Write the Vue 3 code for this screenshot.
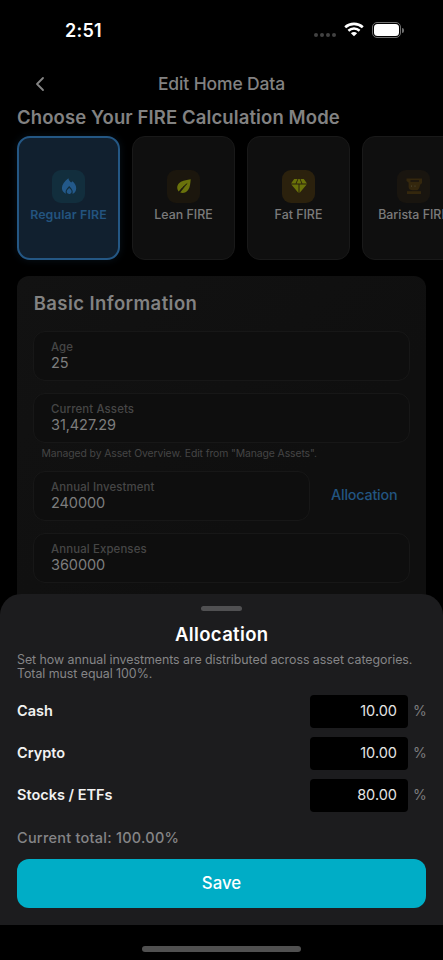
<script setup>
import { ref } from 'vue'

const modes = [
  { key: 'regular', label: 'Regular FIRE' },
  { key: 'lean', label: 'Lean FIRE' },
  { key: 'fat', label: 'Fat FIRE' },
  { key: 'barista', label: 'Barista FIRE' }
]
const selected = ref('regular')
const rows = ref([
  { name: 'Cash', value: '10.00' },
  { name: 'Crypto', value: '10.00' },
  { name: 'Stocks / ETFs', value: '80.00' }
])
</script>

<template>
  <div class="phone">
    <header class="status">
      <span class="time">2:51</span>
      <div class="indicators">
        <span class="dots"><i></i><i></i><i></i><i></i></span>
        <svg class="wifi" viewBox="0 0 20 15" fill="none" stroke="#fff">
          <path d="M1.2 5.2C6.2 .7 13.8 .7 18.8 5.2" stroke-width="2.7" />
          <path d="M4.4 8.7C7.6 5.8 12.4 5.8 15.6 8.7" stroke-width="2.5" />
          <path d="M10 14.2 6.9 11.2C8.6 9.6 11.4 9.6 13.1 11.2Z" fill="#fff" stroke="none" />
        </svg>
        <span class="battery"><b></b></span>
        <span class="cap"></span>
      </div>
    </header>

    <nav class="nav">
      <svg class="back" viewBox="0 0 10 16" fill="none" stroke="#858585" stroke-width="1.8" stroke-linecap="round" stroke-linejoin="round">
        <path d="M8 2 2 8l6 6" />
      </svg>
      <span class="nav-title">Edit Home Data</span>
    </nav>

    <h2 class="heading">Choose Your FIRE Calculation Mode</h2>

    <div class="modes">
      <div v-for="m in modes" :key="m.key" class="mode" :class="[m.key, { active: selected === m.key }]" @click="selected = m.key">
        <span class="badge">
          <svg v-if="m.key === 'regular'" viewBox="0 0 16 16">
            <path fill="#23598a" fill-rule="evenodd" d="M7.4.2C7.8 2.4 9 3.4 10.2 4.5L11.4 3.2C13.8 5.2 15.2 7.6 15.2 10.2C15.2 13.2 13.6 15.3 11.4 15.8C12.4 13.3 11.4 11.3 8.2 8C5 11.3 3.9 13.3 5 15.8C2.6 15 .9 12.9.9 10.1C.9 6.4 3.6 3.2 7.4.2ZM8.2 10.1C10.3 12 10.9 13 10.5 14.2C10.1 15.6 9.2 15.9 8.2 15.9S6.2 15.5 5.8 14.2C5.5 13 6.2 12 8.2 10.1Z" />
          </svg>
          <svg v-else-if="m.key === 'lean'" viewBox="0 0 16 16">
            <path fill="#6a720b" d="M14.7 1.2C9 2 5.2 2.8 3 5.2C.4 8 1 11.3 2.8 13.6L11.4 5.5 4.2 14.6C7.2 15.4 10.3 14.7 12.1 12C14.2 9 14.3 5.4 14.7 1.2Z" />
            <path d="M3 14.4C5 10.8 7.4 8.3 11.2 5.6" fill="none" stroke="#19150d" stroke-width=".9" />
          </svg>
          <svg v-else-if="m.key === 'fat'" viewBox="0 0 16 16" fill="#6a7209">
            <path d="M3.2 1H6.5L4.6 5.5H0ZM7.4 1h1.2l1.9 4.5h-5ZM9.5 1h3.3L16 5.5h-4.6ZM.3 6.5h7.2V15ZM8.5 6.5h7.2L8.5 15Z" />
          </svg>
          <svg v-else viewBox="0 0 16 16" fill="#34270d">
            <path fill-rule="evenodd" d="M.5.5H16.5V5L14.5 6.3 13 10.5 11.5 12.2H6C3.6 12.2 2.6 10.8 2.6 8.6V4.5L.5 3ZM4.5 2.2V3.8H13V2.2Z" />
            <path d="M1 13.2H15V16H1Z" />
            <circle cx="5.5" cy="8" r=".5" fill="#5b5948" /><circle cx="9" cy="8" r=".5" fill="#5b5948" />
          </svg>
        </span>
        <span class="mode-label">{{ m.label }}</span>
      </div>
    </div>

    <section class="panel">
      <h3 class="panel-title">Basic Information</h3>
      <div class="field">
        <span class="label">Age</span><span class="value">25</span>
      </div>
      <div class="field">
        <span class="label">Current Assets</span><span class="value">31,427.29</span>
      </div>
      <p class="note">Managed by Asset Overview. Edit from "Manage Assets".</p>
      <div class="invest">
        <div class="field">
          <span class="label">Annual Investment</span><span class="value">240000</span>
        </div>
        <span class="link">Allocation</span>
      </div>
      <div class="field">
        <span class="label">Annual Expenses</span><span class="value">360000</span>
      </div>
    </section>

    <div class="overlay">
      <section class="sheet">
        <div class="handle"></div>
        <h1 class="sheet-title">Allocation</h1>
        <p class="desc">Set how annual investments are distributed across asset categories.<br>Total must equal 100%.</p>
        <div v-for="r in rows" :key="r.name" class="row">
          <span class="name">{{ r.name }}</span>
          <span class="amount">{{ r.value }}</span>
          <span class="pct">%</span>
        </div>
        <p class="total">Current total: 100.00%</p>
        <button class="save">Save</button>
      </section>
      <footer class="footer"><div class="home"></div></footer>
    </div>
  </div>
</template>

<style>
body { background: #000; }
</style>

<style scoped>
* { box-sizing: border-box; margin: 0; padding: 0; }
.phone {
  position: relative; width: 443px; height: 960px; overflow: hidden;
  background: #000; color: #828282; font-family: Inter, sans-serif;
  display: flex; flex-direction: column; white-space: nowrap;
}
.status { height: 59px; flex: none; display: flex; justify-content: space-between; padding: 0 39px 0 65px; }
.time { color: #fff; font-size: 18px; font-weight: 600; line-height: 61px; letter-spacing: .25px; }
.indicators { display: flex; align-items: flex-start; padding-top: 22px; }
.dots { display: flex; gap: 2px; margin: 11px 8px 0 0; }
.dots i { width: 4px; height: 4px; border-radius: 50%; background: #424242; }
.wifi { width: 20px; height: 15px; margin-right: 8px; }
.battery { width: 29px; height: 16px; border: 1px solid #6e6e6e; border-radius: 5px; padding: 1px; display: flex; }
.battery b { flex: 1; background: #fff; border-radius: 3.5px; }
.cap { width: 2px; height: 5px; margin: 6px 0 0 1px; background: #6e6e6e; border-radius: 0 2px 2px 0; }

.nav { height: 48px; flex: none; display: grid; grid-template-columns: 60px 1fr 60px; align-items: center; text-align: center; padding-top: 1px; }
.back { width: 10px; height: 16px; justify-self: end; margin-right: 15.5px; }
.nav-title { font-size: 17.5px; font-weight: 500; line-height: 22px; letter-spacing: -.14px; }
.heading { height: 21px; flex: none; padding-left: 17px; font-size: 18.5px; font-weight: 600; line-height: 21px; letter-spacing: .11px; }

.modes { display: flex; gap: 12px; flex: none; height: 148px; padding: 8px 0 16px 17px; }
.mode {
  width: 103px; height: 124px; flex: none; border-radius: 13px; border: 1px solid #191919; background: #0f0f0f;
  display: flex; flex-direction: column; align-items: center; padding-top: 33px; color: #7b7b7b;
}
.mode.active { border: 2px solid #245784; background: #11202f; padding-top: 32px; color: #23547f; box-shadow: 0 0 9px #08121b; }
.badge { width: 33px; height: 33px; border-radius: 9px; background: #1b160d; display: flex; align-items: flex-start; justify-content: center; padding-top: 8px; }
.badge svg { width: 16px; height: 16px; }
.regular .badge { background: #122e3d; }
.fat .badge { background: #2b210d; }
.barista .badge { background: #19150f; }
.mode-label { margin-top: 3px; font-size: 12.4px; line-height: 17px; font-weight: 500; }
.active .mode-label { font-weight: 600; letter-spacing: .12px; }

.panel { flex: none; width: 409px; height: 400px; margin-left: 17px; padding: 15px 16px; border-radius: 12px; background: linear-gradient(135deg, #121212, #0f0f0f 60%); display: flex; flex-direction: column; }
.panel-title { height: 25px; margin-bottom: 15px; padding-left: .7px; font-size: 18.5px; font-weight: 600; line-height: 25px; letter-spacing: .42px; }
.field { height: 50px; margin-bottom: 12px; border: 1px solid #171717; border-radius: 12px; background: #0e0e0e; padding: 7px 17px; display: flex; flex-direction: column; flex: none; align-items: flex-start; }
.label { font-size: 11.4px; line-height: 17px; height: 16px; font-weight: 500; color: #464646; letter-spacing: .13px; }
.value { font-size: 14.5px; line-height: 16px; color: #7d7d7d; letter-spacing: -.07px; }
.note { height: 28px; margin-top: -12px; padding-left: 8.5px; font-size: 10.4px; line-height: 21px; color: #454545; letter-spacing: -.1px; }
.invest { display: flex; height: 62px; flex: none; }
.invest .field { width: 277px; }
.link { margin-left: 21px; color: #225581; font-size: 14.3px; font-weight: 500; line-height: 48px; letter-spacing: -.18px; }

.overlay { position: absolute; left: 0; right: 0; bottom: 0; height: 366px; }
.sheet { height: 331px; background: #1c1c1e; border-radius: 21px 21px 0 0; padding: 12px 17px 17px; display: flex; flex-direction: column; }
.handle { width: 41px; height: 5px; border-radius: 3px; background: #505052; align-self: center; flex: none; }
.sheet-title { color: #fff; font-size: 18.5px; line-height: 24px; height: 24px; margin-top: 11px; padding-left: .5px; font-weight: 600; text-align: center; letter-spacing: .36px; }
.desc { margin-top: 7px; height: 34px; font-size: 12.4px; line-height: 14.4px; color: #858587; letter-spacing: -.045px; }
.row { height: 34px; margin-top: 8px; display: flex; align-items: center; flex: none; }
.desc + .row { margin-top: 7px; }
.name { flex: 1; color: #f2f2f2; font-size: 14.5px; font-weight: 600; line-height: 34px; height: 34px; }
.amount { width: 98px; height: 33px; border-radius: 4px; background: #000; color: #e5e5e5; text-align: right; padding-right: 11px; font-size: 14.5px; line-height: 32px; }
.pct { width: 18px; padding-left: 5px; color: #7d7d7f; font-size: 14px; height: 34px; line-height: 33px; }
.total { margin-top: 16px; height: 20px; line-height: 19px; color: #858587; font-size: 14.5px; font-weight: 500; letter-spacing: .25px; }
.save { margin-top: auto; height: 49px; flex: none; border: 0; border-radius: 12px; background: #00adc6; color: #fff; font: 500 16.8px/49px Inter, sans-serif; }
.footer { height: 35px; background: #000; padding-top: 21px; }
.home { width: 159px; height: 6px; margin: 0 auto; border-radius: 3px; background: #505050; }
</style>
